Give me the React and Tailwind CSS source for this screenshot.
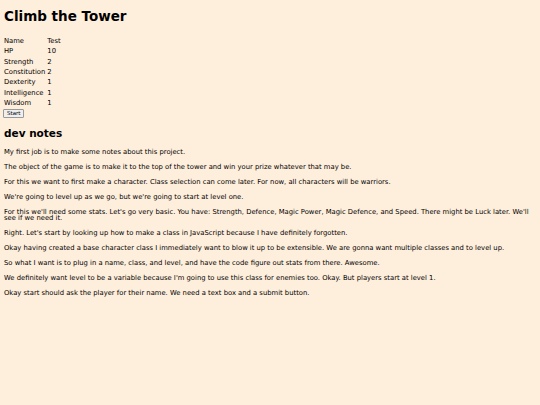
export default function App() {
  const stats = [
    ['Name', 'Test'],
    ['HP', '10'],
    ['Strength', '2'],
    ['Constitution', '2'],
    ['Dexterity', '1'],
    ['Intelligence', '1'],
    ['Wisdom', '1'],
  ];
  const notes = [
    'My first job is to make some notes about this project.',
    'The object of the game is to make it to the top of the tower and win your prize whatever that may be.',
    'For this we want to first make a character. Class selection can come later. For now, all characters will be warriors.',
    "We're going to level up as we go, but we're going to start at level one.",
    "For this we'll need some stats. Let's go very basic. You have: Strength, Defence, Magic Power, Magic Defence, and Speed. There might be Luck later. We'll see if we need it.",
    "Right. Let's start by looking up how to make a class in JavaScript because I have definitely forgotten.",
    'Okay having created a base character class I immediately want to blow it up to be extensible. We are gonna want multiple classes and to level up.',
    'So what I want is to plug in a name, class, and level, and have the code figure out stats from there. Awesome.',
    "We definitely want level to be a variable because I'm going to use this class for enemies too. Okay. But players start at level 1.",
    'Okay start should ask the player for their name. We need a text box and a submit button.',
  ];

  return (
    <div className="min-h-[405px] bg-[#feeedc] px-[4px] pt-[7px] text-[6.8px] leading-[10px] text-black font-['DejaVu_Sans',sans-serif]">
      <h1 className="text-[13.5px] leading-[18px] font-bold">Climb the Tower</h1>
      <table className="mt-[11px] border-separate border-spacing-0">
        <tbody>
          {stats.map(([k, v]) => (
            <tr key={k}>
              <td className="pr-[2px] h-[10.3px] p-0 align-middle">{k}</td>
              <td className="h-[10.3px] p-0 align-middle">{v}</td>
            </tr>
          ))}
        </tbody>
      </table>
      <button className="mt-[1px] -ml-[1px] px-[3px] text-[5.5px] leading-[7px] border border-[#999] bg-[#efefef] rounded-[1px]">
        Start
      </button>
      <h2 className="mt-[8px] text-[10.5px] leading-[14px] font-bold">dev notes</h2>
      <div className="mt-[9px] flex flex-col gap-[8.3px] leading-[6.6px]">
        {notes.map((n, i) => (
          <p key={i}>{n}</p>
        ))}
      </div>
    </div>
  );
}
